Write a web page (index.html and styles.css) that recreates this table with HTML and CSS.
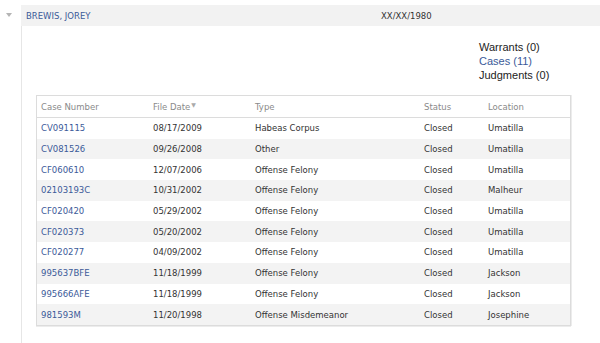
FILE: index.html
```html
<!DOCTYPE html>
<html>
<head>
<meta charset="utf-8">
<link rel="stylesheet" href="styles.css">
</head>
<body>
<div class="record">
  <div class="toggle"><span class="caret"></span></div>
  <div class="main">
    <div class="bar">
      <a class="name">BREWIS, JOREY</a>
      <span class="dob">XX/XX/1980</span>
    </div>
    <div class="body">
      <div class="counts">
        <div>Warrants (0)</div>
        <div class="link">Cases (11)</div>
        <div>Judgments (0)</div>
      </div>
      <div class="table">
        <div class="row head">
          <div class="c1">Case Number</div>
          <div class="c2">File Date<span class="sort">▼</span></div>
          <div class="c3">Type</div>
          <div class="c4">Status</div>
          <div class="c5">Location</div>
        </div>
        <div class="row"><div class="c1 link">CV091115</div><div class="c2">08/17/2009</div><div class="c3">Habeas Corpus</div><div class="c4">Closed</div><div class="c5">Umatilla</div></div>
        <div class="row alt"><div class="c1 link">CV081526</div><div class="c2">09/26/2008</div><div class="c3">Other</div><div class="c4">Closed</div><div class="c5">Umatilla</div></div>
        <div class="row"><div class="c1 link">CF060610</div><div class="c2">12/07/2006</div><div class="c3">Offense Felony</div><div class="c4">Closed</div><div class="c5">Umatilla</div></div>
        <div class="row alt"><div class="c1 link">02103193C</div><div class="c2">10/31/2002</div><div class="c3">Offense Felony</div><div class="c4">Closed</div><div class="c5">Malheur</div></div>
        <div class="row"><div class="c1 link">CF020420</div><div class="c2">05/29/2002</div><div class="c3">Offense Felony</div><div class="c4">Closed</div><div class="c5">Umatilla</div></div>
        <div class="row alt"><div class="c1 link">CF020373</div><div class="c2">05/20/2002</div><div class="c3">Offense Felony</div><div class="c4">Closed</div><div class="c5">Umatilla</div></div>
        <div class="row"><div class="c1 link">CF020277</div><div class="c2">04/09/2002</div><div class="c3">Offense Felony</div><div class="c4">Closed</div><div class="c5">Umatilla</div></div>
        <div class="row alt"><div class="c1 link">995637BFE</div><div class="c2">11/18/1999</div><div class="c3">Offense Felony</div><div class="c4">Closed</div><div class="c5">Jackson</div></div>
        <div class="row"><div class="c1 link">995666AFE</div><div class="c2">11/18/1999</div><div class="c3">Offense Felony</div><div class="c4">Closed</div><div class="c5">Jackson</div></div>
        <div class="row alt"><div class="c1 link">981593M</div><div class="c2">11/20/1998</div><div class="c3">Offense Misdemeanor</div><div class="c4">Closed</div><div class="c5">Josephine</div></div>
      </div>
    </div>
  </div>
</div>
</body>
</html>
```
FILE: styles.css
```css
html, body {
  margin: 0;
  padding: 0;
  background: #fff;
}
body {
  font-family: "DejaVu Sans", Verdana, sans-serif;
  font-size: 8.5px;
  color: #333;
  height: 343px;
  overflow: hidden;
}
.record {
  display: flex;
  padding-top: 5px;
}
.toggle {
  width: 21px;
  flex: none;
  display: flex;
  justify-content: center;
  padding-top: 8px;
  box-sizing: border-box;
  padding-right: 3px;
}
.caret {
  width: 0;
  height: 0;
  border-left: 3px solid transparent;
  border-right: 3px solid transparent;
  border-top: 4px solid #b5b5b5;
}
.main {
  flex: 1;
}
.bar {
  height: 21px;
  background: #f2f2f2;
  display: flex;
  align-items: center;
}
.name {
  width: 360px;
  padding-left: 5px;
  box-sizing: border-box;
  color: #3b5a99;
}
.dob {
  color: #333;
}
.link {
  color: #3b5a99;
}
.body {
  border-left: 1px solid #e6e6e6;
  padding: 14px 29px 20px 14px;
  height: 320px;
  box-sizing: border-box;
}
.counts {
  margin-left: 443px;
  font-family: "Liberation Sans", Arial, sans-serif;
  font-size: 11px;
  line-height: 14px;
  color: #222;
}
.counts .link {
  color: #3b5a99;
}
.table {
  margin-top: 13px;
  border: 1px solid #dcdcdc;
  box-shadow: 0 1px 0 #ececec, 1px 0 0 #ececec;
}
.row {
  display: flex;
  align-items: center;
  height: 20.7px;
}
.row.head {
  height: 21px;
  border-bottom: 1px solid #dcdcdc;
  color: #8a8a8a;
}
.row.alt {
  background: #f3f3f3;
}
.row > div {
  padding-left: 4px;
  box-sizing: border-box;
  white-space: nowrap;
}
.c1 { width: 112px; }
.c2 { width: 102px; }
.c3 { width: 169px; }
.c4 { width: 64px; }
.c5 { flex: 1; }
.sort {
  font-size: 6px;
  color: #aaa;
  vertical-align: 3px;
  margin-left: 1px;
}
```
